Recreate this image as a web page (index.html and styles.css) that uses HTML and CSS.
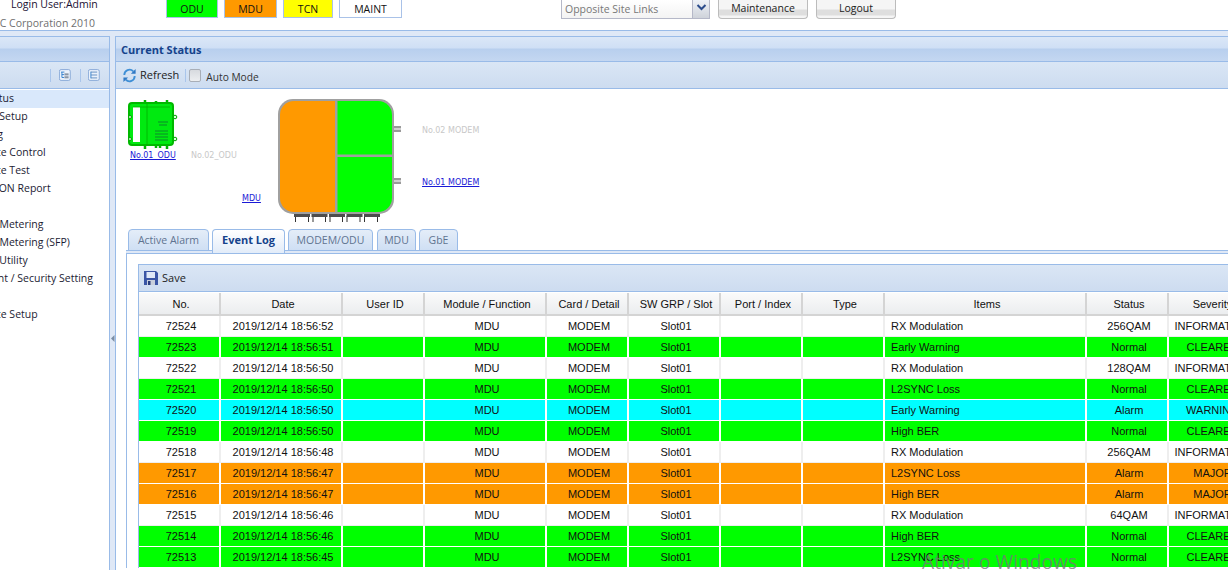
FILE: index.html
```html
<!DOCTYPE html>
<html lang="en">
<head>
<meta charset="utf-8">
<title>Current Status</title>
<link rel="stylesheet" href="styles.css">
</head>
<body>
<div class="page">
  <header class="top">
    <div class="brand">
      <div class="login">Login User:Admin</div>
      <div class="copy">NEC Corporation 2010</div>
    </div>
    <div class="legend">
      <span class="chip odu">ODU</span>
      <span class="chip mdu">MDU</span>
      <span class="chip tcn">TCN</span>
      <span class="chip maint">MAINT</span>
    </div>
    <div class="links">
      <span class="select-text">Opposite Site Links</span>
      <span class="select-arrow"><svg width="11" height="7" viewBox="0 0 11 7"><path d="M1.500 1 5.500 5 9.500 1" fill="none" stroke="#2b4c8c" stroke-width="2"/></svg></span>
    </div>
    <button class="btn btn-maint">Maintenance</button>
    <button class="btn btn-logout">Logout</button>
  </header>
  <div class="workspace">
    <aside class="side">
      <div class="panel-head"></div>
      <div class="toolbar side-tools">
        <span class="sep"></span>
        <svg class="tool-icon" width="14" height="14" viewBox="0 0 14 14"><rect x=".5" y=".5" width="13" height="13" rx="2" fill="#eaf1fb" stroke="#7b9fd3"/><path d="M2.500 3.500h4M3.500 3.500v6.500h2.500M3.500 6.500h2.500" fill="none" stroke="#1f74c8"/><rect x="6.500" y="5" width="5" height="2.500" fill="#8a96a6"/><rect x="6.500" y="8.500" width="5" height="2.500" fill="#8a96a6"/></svg>
        <span class="sep"></span>
        <svg class="tool-icon" width="14" height="14" viewBox="0 0 14 14"><rect x=".5" y=".5" width="13" height="13" rx="2" fill="#eaf1fb" stroke="#7b9fd3"/><path d="M3.500 3v8" fill="none" stroke="#1f74c8"/><path d="M3.500 3.500h7.500M3.500 7h7.500M3.500 10.500h7.500" fill="none" stroke="#4f7fb8"/></svg>
      </div>
      <ul class="tree">
        <li class="selected">Current Status</li>
        <li>Equipment Setup</li>
        <li>Provisioning</li>
        <li>Maintenance Control</li>
        <li>Maintenance Test</li>
        <li>INFORMATION Report</li>
        <li class="empty"></li>
        <li>LAN Power Metering</li>
        <li>LAN Power Metering (SFP)</li>
        <li>Equipment Utility</li>
        <li>Management / Security Setting</li>
        <li class="empty"></li>
        <li>Maintenance Setup</li>
      </ul>
    </aside>
    <div class="splitter"><svg width="4" height="7" viewBox="0 0 4 7"><path d="M3.500 0v7L0 3.500z" fill="#7c8ea5"/></svg></div>
    <main class="main">
      <div class="panel-head main-head">Current Status</div>
      <div class="toolbar main-tools">
        <svg class="refresh" width="15" height="15" viewBox="0 0 16 16"><path d="M2.500 7.500A5.500 5.500 0 0 1 12 3.500" fill="none" stroke="#3f8fd6" stroke-width="2"/><path d="M14.500 1v5h-5z" fill="#2f78c4"/><path d="M13.500 8.500A5.500 5.500 0 0 1 4 12.500" fill="none" stroke="#3f8fd6" stroke-width="2"/><path d="M1.500 15v-5h5z" fill="#2f78c4"/></svg>
        <span class="tool-label refresh-label">Refresh</span>
        <span class="sep"></span>
        <span class="check"></span>
        <span class="auto">Auto Mode</span>
      </div>
      <div class="content">
        <div class="diagram">
          <svg class="odu-pic" width="50" height="52" viewBox="0 0 50 52">
            <path d="M17 5V1M28 5V2M39 5V1M17 46v4M28 46v3M32 46v3M39 46v4" stroke="#00b400" stroke-width="2.500"/>
            <circle cx="47" cy="18" r="1.800" fill="#dfffdf" stroke="#00a000"/>
            <circle cx="47" cy="40" r="1.800" fill="#dfffdf" stroke="#00a000"/>
            <rect x="1" y="4" width="44" height="42" rx="3" fill="#00ea10" stroke="#00b800" stroke-width="2"/>
            <path d="M5 8H12V43H5Z" fill="#fff"/>
            <circle cx="2" cy="18" r="1.500" fill="#dfffdf" stroke="#00a000"/>
            <circle cx="2" cy="40" r="1.500" fill="#dfffdf" stroke="#00a000"/>
            <path d="M19 4v42M5 8H42" stroke="#00b000" stroke-width=".8"/>
            <path d="M30 23h10M31 26h8M27 32h13M27 35h13M27 38h13M27 41h13" stroke="#0a8a2a"/>
          </svg>
          <a class="dev-link l-odu1">No.01_ODU</a>
          <span class="dev-off l-odu2">No.02_ODU</span>
          <a class="dev-link l-mdu">MDU</a>
          <svg class="mdu-pic" width="124" height="124" viewBox="0 0 124 124">
            <g fill="#9a9a9a"><rect x="115" y="27" width="8" height="6"/><rect x="115" y="79" width="8" height="6"/></g>
            <g fill="#cfcfcf"><rect x="116" y="29" width="7" height="2"/><rect x="116" y="81" width="7" height="2"/></g>
            <rect x="0" y="0" width="116" height="115" rx="15" fill="#a0a0a0"/>
            <path d="M57 2V113H16A14 14 0 0 1 2 99V16A14 14 0 0 1 16 2Z" fill="#ff9900"/>
            <path d="M59.500 2H100A14 14 0 0 1 114 16V55.500H59.500Z" fill="#00ff00"/>
            <path d="M59.500 58H114V99A14 14 0 0 1 100 113H59.500Z" fill="#00ff00"/>
            <g fill="none" stroke="#333"><path d="M17.500 123v-6M30.500 123v-6M35 123v-6M47.500 123v-6M52 123v-6M64.500 123v-6M69 123v-6M82 123v-6M86.500 123v-6M99.500 123v-6"/></g>
            <g fill="#4d4d4d"><rect x="16" y="115" width="16" height="3"/><rect x="33.500" y="115" width="16" height="3"/><rect x="51" y="115" width="16" height="3"/><rect x="68.500" y="115" width="16" height="3"/><rect x="86" y="115" width="16" height="3"/></g>
          </svg>
          <span class="dev-off l-m2">No.02 MODEM</span>
          <a class="dev-link l-m1">No.01 MODEM</a>
        </div>
        <nav class="tabs">
          <span class="tab t1">Active Alarm</span>
          <span class="tab t2 active">Event Log</span>
          <span class="tab t3">MODEM/ODU</span>
          <span class="tab t4">MDU</span>
          <span class="tab t5">GbE</span>
        </nav>
        <div class="tab-gap"></div>
        <section class="tab-body">
          <div class="grid-panel">
            <div class="toolbar grid-tools">
              <svg width="14" height="14" viewBox="0 0 14 14"><path d="M0 0h12l2 2v12H0z" fill="#3a55a5"/><rect x="2.500" y="1" width="8.500" height="6" fill="#dfe8f7"/><rect x="3" y="9" width="8" height="5" fill="#c8cfdc"/><rect x="4" y="10" width="2.500" height="4" fill="#2a3d7d"/></svg>
              <span class="tool-label save-label">Save</span>
            </div>
            <table class="log">
              <colgroup>
                <col class="c82"><col class="c122"><col class="c82"><col class="c122"><col class="c82"><col class="c92"><col class="c82"><col class="c82"><col class="c202"><col class="c82"><col class="c85">
              </colgroup>
              <thead>
                <tr><th>No.</th><th>Date</th><th>User ID</th><th>Module / Function</th><th>Card / Detail</th><th>SW GRP / Slot</th><th>Port / Index</th><th>Type</th><th>Items</th><th>Status</th><th>Severity</th></tr>
              </thead>
              <tbody>
                <tr><td>72524</td><td>2019/12/14 18:56:52</td><td></td><td>MDU</td><td>MODEM</td><td>Slot01</td><td></td><td></td><td class="item">RX Modulation</td><td>256QAM</td><td>INFORMATION</td></tr>
                <tr class="g"><td>72523</td><td>2019/12/14 18:56:51</td><td></td><td>MDU</td><td>MODEM</td><td>Slot01</td><td></td><td></td><td class="item">Early Warning</td><td>Normal</td><td>CLEARED</td></tr>
                <tr><td>72522</td><td>2019/12/14 18:56:50</td><td></td><td>MDU</td><td>MODEM</td><td>Slot01</td><td></td><td></td><td class="item">RX Modulation</td><td>128QAM</td><td>INFORMATION</td></tr>
                <tr class="g"><td>72521</td><td>2019/12/14 18:56:50</td><td></td><td>MDU</td><td>MODEM</td><td>Slot01</td><td></td><td></td><td class="item">L2SYNC Loss</td><td>Normal</td><td>CLEARED</td></tr>
                <tr class="c"><td>72520</td><td>2019/12/14 18:56:50</td><td></td><td>MDU</td><td>MODEM</td><td>Slot01</td><td></td><td></td><td class="item">Early Warning</td><td>Alarm</td><td>WARNING</td></tr>
                <tr class="g"><td>72519</td><td>2019/12/14 18:56:50</td><td></td><td>MDU</td><td>MODEM</td><td>Slot01</td><td></td><td></td><td class="item">High BER</td><td>Normal</td><td>CLEARED</td></tr>
                <tr><td>72518</td><td>2019/12/14 18:56:48</td><td></td><td>MDU</td><td>MODEM</td><td>Slot01</td><td></td><td></td><td class="item">RX Modulation</td><td>256QAM</td><td>INFORMATION</td></tr>
                <tr class="o"><td>72517</td><td>2019/12/14 18:56:47</td><td></td><td>MDU</td><td>MODEM</td><td>Slot01</td><td></td><td></td><td class="item">L2SYNC Loss</td><td>Alarm</td><td>MAJOR</td></tr>
                <tr class="o"><td>72516</td><td>2019/12/14 18:56:47</td><td></td><td>MDU</td><td>MODEM</td><td>Slot01</td><td></td><td></td><td class="item">High BER</td><td>Alarm</td><td>MAJOR</td></tr>
                <tr><td>72515</td><td>2019/12/14 18:56:46</td><td></td><td>MDU</td><td>MODEM</td><td>Slot01</td><td></td><td></td><td class="item">RX Modulation</td><td>64QAM</td><td>INFORMATION</td></tr>
                <tr class="g"><td>72514</td><td>2019/12/14 18:56:46</td><td></td><td>MDU</td><td>MODEM</td><td>Slot01</td><td></td><td></td><td class="item">High BER</td><td>Normal</td><td>CLEARED</td></tr>
                <tr class="g"><td>72513</td><td>2019/12/14 18:56:45</td><td></td><td>MDU</td><td>MODEM</td><td>Slot01</td><td></td><td></td><td class="item">L2SYNC Loss</td><td>Normal</td><td>CLEARED</td></tr>
              </tbody>
            </table>
          </div>
        </section>
      </div>
    </main>
  </div>
</div>
<div class="watermark">Ativar o Windows</div>
</body>
</html>
```
FILE: styles.css
```css
* { box-sizing: border-box; }
html, body { margin: 0; padding: 0; height: 100%; overflow: hidden; background: #fff; }
body { font-family: "Open Sans", "Noto Sans", sans-serif; font-size: 10.5px; color: #222; }
.page { width: 1700px; height: 570px; margin-left: -120px; display: flex; flex-direction: column; overflow: hidden; }

.top { height: 31px; flex: none; display: flex; align-items: flex-start; border-bottom: 1px solid #99bbe8; }
.brand { width: 286px; flex: none; }
.login { height: 12px; margin-left: 131px; line-height: 9px; color: #1a1033; }
.copy { margin: 5px 0 0 106px; color: #6f6f6f; line-height: 13px; white-space: nowrap; }
.legend { display: flex; gap: 6px; }
.chip { height: 18px; line-height: 18px; text-align: center; border: 1px solid #a9c2e8; border-top: 0; color: #111; }
.odu { width: 52px; background: #00ff00; }
.mdu { width: 53px; background: #ff9900; }
.tcn { width: 50px; background: #ffff00; }
.maint { width: 63px; background: #fff; }
.links { width: 149px; height: 19px; margin-left: 159px; display: flex; border: 1px solid #b5b8c8; border-top: 0; background: linear-gradient(#fff, #f3f3f3); }
.select-text { flex: 1; padding-left: 3px; line-height: 18px; color: #777; white-space: nowrap; }
.select-arrow { width: 17px; display: flex; justify-content: center; padding-top: 4px; border-left: 1px solid #b5b8c8; background: linear-gradient(#eef2f8, #cfd3da); }
.btn { height: 19px; padding: 0 0 3px; border: 1px solid #bcbcbc; border-top: 0; border-radius: 0 0 4px 4px; font: 10.5px "Open Sans", "Noto Sans", sans-serif; color: #222; background: linear-gradient(#f5f5f5 0, #f5f5f5 9px, #dedede 10px, #dedede 15px, #f5f5f5 16px); }
.btn-maint { width: 90px; margin-left: 8px; }
.btn-logout { width: 80px; margin-left: 8px; }

.workspace { flex: 1; display: flex; padding-top: 5px; background: #dfe8f6; min-height: 0; }
.side { width: 230px; flex: none; display: flex; flex-direction: column; background: #fff; border-right: 1px solid #99bbe8; }
.main { flex: 1; display: flex; flex-direction: column; background: #fff; border-left: 1px solid #99bbe8; min-width: 0; }
.splitter { width: 5px; flex: none; display: flex; align-items: flex-start; justify-content: center; padding-top: 299px; background: #dfe8f6; }

.panel-head { height: 26px; flex: none; border-top: 1px solid #99bbe8; border-bottom: 1px solid #99bbe8; background: linear-gradient(#dbe7f7 0, #cfdff5 11px, #b8cfee 12px, #c4d7f1 100%); }
.main-head { padding-left: 5px; line-height: 26px; font-size: 11px; font-weight: 700; color: #15428b; }
.toolbar { display: flex; align-items: center; flex: none; background: linear-gradient(#dae6f5, #cddcf0); border-bottom: 1px solid #99bbe8; }
.side-tools { height: 27px; padding-left: 170px; }
.main-tools { height: 27px; padding-left: 6px; }
.sep { width: 1px; height: 13px; background: #a9c5eb; }
.tool-icon { margin: 0 9px 0 8px; }
.refresh { margin-right: 3px; }
.tool-label { color: #222; font-size: 11px; }
.refresh-label { margin-bottom: 2px; }
.save-label { margin-bottom: 1px; }
.main-tools .sep { margin: 0 3px 0 6px; }
.check { width: 12px; height: 13px; border: 1px solid #a8aeb7; border-radius: 2px; background: linear-gradient(#d7dadf, #eceef0); }
.auto { margin: 3px 0 0 5px; font-size: 10.2px; color: #333; }

.tree { list-style: none; margin: 1px 0 0; padding: 0; }
.tree li { height: 18px; line-height: 16px; padding-left: 63px; color: #1b1b33; white-space: nowrap; }
.tree .selected { background: #d9e8fb; }

.content { flex: 1; padding: 0 0 0 10px; min-height: 0; }
.diagram { position: relative; height: 140px; }
.odu-pic { position: absolute; left: 2px; top: 10px; }
.mdu-pic { position: absolute; left: 152px; top: 10px; }
.dev-link, .dev-off { position: absolute; font-family: "DejaVu Sans", sans-serif; font-size: 8px; line-height: 10px; white-space: nowrap; }
.dev-link { color: #1a1ad6; text-decoration: underline; }
.dev-off { color: #c8c8c8; }
.l-odu1 { left: 4px; top: 62px; }
.l-odu2 { left: 65px; top: 62px; }
.l-mdu { left: 116px; top: 105px; }
.l-m2 { left: 296px; top: 37px; }
.l-m1 { left: 296px; top: 89px; }

.tabs { height: 22px; padding-left: 2px; display: flex; align-items: flex-start; position: relative; z-index: 1; border-bottom: 1px solid #99bbe8; }
.tab { height: 22px; line-height: 20px; text-align: center; color: #5f7390; border: 1px solid #99bbe8; border-radius: 4px 4px 0 0; background: linear-gradient(#e4edf8, #cfdff4); }
.t1 { width: 81px; }
.t2 { width: 73px; margin-left: 3px; }
.t3 { width: 85px; margin-left: 3px; }
.t4 { width: 39px; margin-left: 4px; }
.t5 { width: 39px; margin-left: 3px; }
.tab.active { height: 24px; font-size: 11px; font-weight: 700; color: #15428b; border-bottom: 0; background: linear-gradient(#fff, #e2ecf9); }
.tab-gap { height: 2px; background: #dfe8f6; }
.tab-body { padding: 10px 0 0 11px; border-left: 1px solid #99bbe8; border-top: 1px solid #99bbe8; }
.grid-panel { border-left: 1px solid #99bbe8; border-top: 1px solid #99bbe8; }
.grid-tools { height: 27px; padding-left: 5px; gap: 4px; }

.log { width: 1115px; margin-top: 1px; table-layout: fixed; border-collapse: separate; border-spacing: 0; font-family: "Liberation Sans", Arial, sans-serif; font-size: 11px; color: #111; }
.c82 { width: 82px; }
.c85 { width: 85px; }
.c92 { width: 92px; }
.c122 { width: 122px; }
.c202 { width: 202px; }
.log th { height: 23px; padding: 0 0 0 4px; font-weight: 400; background: linear-gradient(#fafafa, #ebedef); border-right: 2px solid #d4d4d4; border-bottom: 2px solid #d4d4d4; }
.log td { height: 21px; padding: 0 0 0 4px; text-align: center; white-space: nowrap; overflow: hidden; border-right: 2px solid #eee; border-bottom: 1px solid #eee; }
.log .item { padding-left: 6px; text-align: left; }
.log .g td { background: #00ff00; border-color: #fff; }
.log .c td { background: #00ffff; border-color: #fff; }
.log .o td { background: #ff9900; border-color: #fff; }

.watermark { position: absolute; left: 922px; top: 548px; font-family: "Open Sans", sans-serif; font-size: 19.2px; line-height: 28px; color: rgba(120,120,120,.8); white-space: nowrap; }
```
